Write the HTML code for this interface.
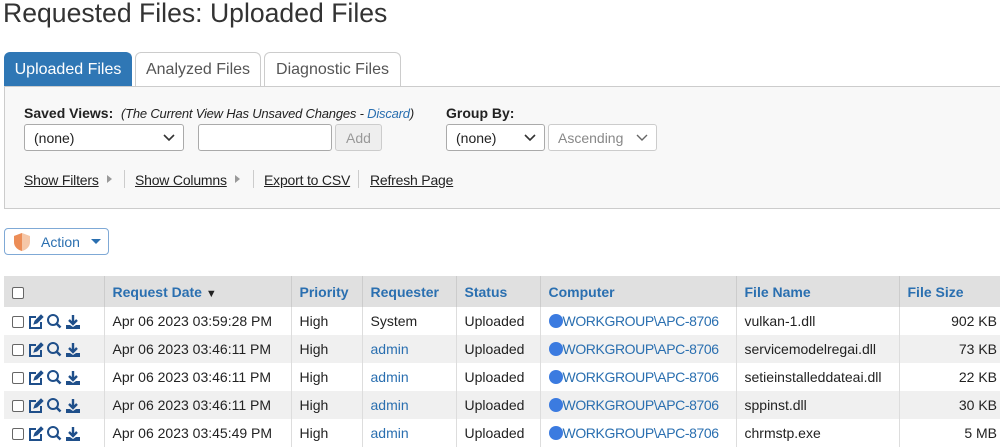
<!DOCTYPE html>
<html><head><style>
*{box-sizing:border-box}
body{margin:0;width:1000px;height:448px;overflow:hidden;font-family:"Liberation Sans",Arial,sans-serif;font-size:14px;color:#222;background:#fff;position:relative}
.a{position:absolute}
h1{position:absolute;left:3px;top:-2px;margin:0;font-weight:normal;font-size:26.6px;color:#333}
.tab{position:absolute;top:52px;height:35px;border:1px solid #ccc;border-bottom:none;border-radius:6px 6px 0 0;background:#fff;font-size:16px;color:#555;padding-top:8px;text-align:center}
.panel{position:absolute;left:4px;top:86px;width:1000px;height:123px;background:#f8f8f8;border:1px solid #ccc}
.sel{position:absolute;height:27px;border:1px solid #aaa;border-radius:3px;background:#fff;font-size:14px;padding:5px 9px;color:#222}
.sel svg{position:absolute;right:8px;top:9px}
.lnk{position:absolute;top:172px;font-size:14px;text-decoration:underline;color:#222;letter-spacing:-0.2px}
.sep{position:absolute;top:170px;width:1px;height:18px;background:#ccc}
.tri{position:absolute;top:175px;width:0;height:0;border-left:5px solid #999;border-top:4px solid transparent;border-bottom:4px solid transparent}
table{position:absolute;left:4px;top:276px;border-collapse:collapse;width:996px}
td,th{height:28px;padding:0 8px;border-left:1px solid #ddd;font-size:14px;white-space:nowrap}
th{height:31px;background:#e0e0e0;text-align:left;color:#2a6fb0;font-weight:bold;border-left:1px solid #ccc}
tr.g td{background:#f0f0f0}
.cb{display:inline-block;width:12px;height:12px;border:1px solid #666;border-radius:2px;background:#fff;vertical-align:middle}
.bl{color:#2a6fb0}
.pc{letter-spacing:-0.4px}
.dot{display:inline-block;width:14px;height:14px;border-radius:50%;background:#3b7be0;vertical-align:-2px}
</style></head><body>
<h1>Requested Files: Uploaded Files</h1>
<div class="tab" style="left:4px;width:128px;background:#2f77b5;border-color:#2f77b5;color:#fff">Uploaded Files</div>
<div class="tab" style="left:135px;width:126px">Analyzed Files</div>
<div class="tab" style="left:264px;width:137px">Diagnostic Files</div>
<div class="panel"></div>
<div class="a" style="left:24px;top:105px;font-size:14px;white-space:nowrap"><b>Saved Views:</b>&nbsp; <i style="font-size:13px;letter-spacing:-0.2px">(The Current View Has Unsaved Changes - <span class="bl">Discard</span>)</i></div>
<div class="a" style="left:446px;top:105px;font-size:14px;font-weight:bold">Group By:</div>
<div class="sel" style="left:24px;top:124px;width:160px">(none)<svg width="12" height="8"><path d="M1 1l5 5 5-5" stroke="#333" stroke-width="1.6" fill="none"/></svg></div>
<div class="sel" style="left:198px;top:124px;width:134px"></div>
<div class="sel" style="left:335px;top:124px;width:47px;background:#eee;border-color:#ccc;color:#999;text-align:center;padding-left:0;padding-right:0">Add</div>
<div class="sel" style="left:446px;top:124px;width:99px">(none)<svg width="12" height="8"><path d="M1 1l5 5 5-5" stroke="#333" stroke-width="1.6" fill="none"/></svg></div>
<div class="sel" style="left:548px;top:124px;width:109px;color:#888;border-color:#ccc">Ascending<svg width="12" height="8"><path d="M1 1l5 5 5-5" stroke="#666" stroke-width="1.4" fill="none"/></svg></div>
<div class="lnk" style="left:24px">Show Filters</div><div class="tri" style="left:107px"></div><div class="sep" style="left:124px"></div>
<div class="lnk" style="left:135px">Show Columns</div><div class="tri" style="left:235px"></div><div class="sep" style="left:253px"></div>
<div class="lnk" style="left:264px">Export to CSV</div><div class="sep" style="left:358px"></div>
<div class="lnk" style="left:370px">Refresh Page</div>
<div class="a" style="left:4px;top:228px;width:105px;height:27px;border:1px solid #7fa9d6;border-radius:4px;background:#fff"></div>
<svg class="a" style="left:12px;top:232px" width="20" height="20"><path d="M10 1L2 4v6c0 5 4 8 8 9 4-1 8-4 8-9V4z" fill="#f5c7a8"/><path d="M10 1L2 4v6c0 5 4 8 8 9z" fill="#ec8d57"/></svg>
<div class="a bl" style="left:41px;top:234px;font-size:14px">Action</div>
<div class="a" style="left:91px;top:239px;border-top:5px solid #2a6fb0;border-left:5px solid transparent;border-right:5px solid transparent"></div>
<table>
<tr><th style="width:100px;border-left:none"><span class="cb"></span></th><th style="width:187px">Request Date <span style="color:#222;font-size:11px">▼</span></th><th style="width:71px">Priority</th><th style="width:94px">Requester</th><th style="width:84px">Status</th><th style="width:196px">Computer</th><th style="width:163px">File Name</th><th>File Size</th></tr>
<tr><td style="border-left:none;padding-left:8px"><span class="cb"></span> <svg width="60" height="16" style="vertical-align:middle"><g fill="none" stroke="#1f4f8a" stroke-width="2"><path d="M8 3H2v11h11V8"/><path d="M6 10l1-3 6-6 2 2-6 6z" fill="#1f4f8a" stroke-width="1"/></g><circle cx="25" cy="6" r="5" fill="none" stroke="#1f4f8a" stroke-width="2"/><path d="M28.5 9.5l4 4" stroke="#1f4f8a" stroke-width="2.5"/><path d="M45 1v8M41 6l4 4 4-4" stroke="#1f4f8a" stroke-width="2.4" fill="none"/><path d="M38 11h4l3 2 3-2h4v4H38z" fill="#1f4f8a"/></svg></td><td>Apr 06 2023 03:59:28 PM</td><td>High</td><td>System</td><td>Uploaded</td><td><span class="dot"></span><span class="bl pc">WORKGROUP\APC-8706</span></td><td>vulkan-1.dll</td><td style="text-align:right;padding-right:3px">902 KB</td></tr>
<tr class="g"><td style="border-left:none"><span class="cb"></span> <svg width="60" height="16" style="vertical-align:middle"><g fill="none" stroke="#1f4f8a" stroke-width="2"><path d="M8 3H2v11h11V8"/><path d="M6 10l1-3 6-6 2 2-6 6z" fill="#1f4f8a" stroke-width="1"/></g><circle cx="25" cy="6" r="5" fill="none" stroke="#1f4f8a" stroke-width="2"/><path d="M28.5 9.5l4 4" stroke="#1f4f8a" stroke-width="2.5"/><path d="M45 1v8M41 6l4 4 4-4" stroke="#1f4f8a" stroke-width="2.4" fill="none"/><path d="M38 11h4l3 2 3-2h4v4H38z" fill="#1f4f8a"/></svg></td><td>Apr 06 2023 03:46:11 PM</td><td>High</td><td class="bl">admin</td><td>Uploaded</td><td><span class="dot"></span><span class="bl pc">WORKGROUP\APC-8706</span></td><td>servicemodelregai.dll</td><td style="text-align:right;padding-right:3px">73 KB</td></tr>
<tr><td style="border-left:none"><span class="cb"></span> <svg width="60" height="16" style="vertical-align:middle"><g fill="none" stroke="#1f4f8a" stroke-width="2"><path d="M8 3H2v11h11V8"/><path d="M6 10l1-3 6-6 2 2-6 6z" fill="#1f4f8a" stroke-width="1"/></g><circle cx="25" cy="6" r="5" fill="none" stroke="#1f4f8a" stroke-width="2"/><path d="M28.5 9.5l4 4" stroke="#1f4f8a" stroke-width="2.5"/><path d="M45 1v8M41 6l4 4 4-4" stroke="#1f4f8a" stroke-width="2.4" fill="none"/><path d="M38 11h4l3 2 3-2h4v4H38z" fill="#1f4f8a"/></svg></td><td>Apr 06 2023 03:46:11 PM</td><td>High</td><td class="bl">admin</td><td>Uploaded</td><td><span class="dot"></span><span class="bl pc">WORKGROUP\APC-8706</span></td><td>setieinstalleddateai.dll</td><td style="text-align:right;padding-right:3px">22 KB</td></tr>
<tr class="g"><td style="border-left:none"><span class="cb"></span> <svg width="60" height="16" style="vertical-align:middle"><g fill="none" stroke="#1f4f8a" stroke-width="2"><path d="M8 3H2v11h11V8"/><path d="M6 10l1-3 6-6 2 2-6 6z" fill="#1f4f8a" stroke-width="1"/></g><circle cx="25" cy="6" r="5" fill="none" stroke="#1f4f8a" stroke-width="2"/><path d="M28.5 9.5l4 4" stroke="#1f4f8a" stroke-width="2.5"/><path d="M45 1v8M41 6l4 4 4-4" stroke="#1f4f8a" stroke-width="2.4" fill="none"/><path d="M38 11h4l3 2 3-2h4v4H38z" fill="#1f4f8a"/></svg></td><td>Apr 06 2023 03:46:11 PM</td><td>High</td><td class="bl">admin</td><td>Uploaded</td><td><span class="dot"></span><span class="bl pc">WORKGROUP\APC-8706</span></td><td>sppinst.dll</td><td style="text-align:right;padding-right:3px">30 KB</td></tr>
<tr><td style="border-left:none"><span class="cb"></span> <svg width="60" height="16" style="vertical-align:middle"><g fill="none" stroke="#1f4f8a" stroke-width="2"><path d="M8 3H2v11h11V8"/><path d="M6 10l1-3 6-6 2 2-6 6z" fill="#1f4f8a" stroke-width="1"/></g><circle cx="25" cy="6" r="5" fill="none" stroke="#1f4f8a" stroke-width="2"/><path d="M28.5 9.5l4 4" stroke="#1f4f8a" stroke-width="2.5"/><path d="M45 1v8M41 6l4 4 4-4" stroke="#1f4f8a" stroke-width="2.4" fill="none"/><path d="M38 11h4l3 2 3-2h4v4H38z" fill="#1f4f8a"/></svg></td><td>Apr 06 2023 03:45:49 PM</td><td>High</td><td class="bl">admin</td><td>Uploaded</td><td><span class="dot"></span><span class="bl pc">WORKGROUP\APC-8706</span></td><td>chrmstp.exe</td><td style="text-align:right;padding-right:3px">5 MB</td></tr>
</table>
</body></html>
